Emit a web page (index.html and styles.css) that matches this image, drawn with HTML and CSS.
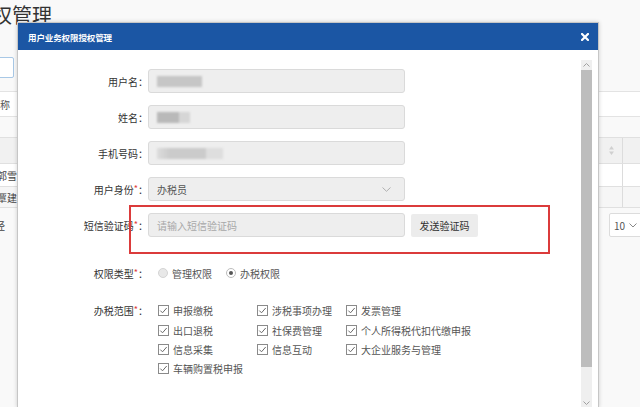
FILE: index.html
```html
<!DOCTYPE html>
<html lang="zh-CN">
<head>
<meta charset="utf-8">
<title>授权管理</title>
<link rel="stylesheet" href="styles.css">
</head>
<body>
<div class="page">
  <div class="page-title">授权管理</div>
  <div class="search-row"><div class="search-input"></div></div>
  <div class="filter-row"><span class="filter-text">名称</span></div>
  <div class="table">
    <div class="trow thead">
      <span class="cell-left"></span>
      <div class="cell-right">
        <span class="cell-a"><svg class="sort" width="5" height="9" viewBox="0 0 5 9"><path d="M2.5 0 L5 3.5 H0 Z M2.5 9 L5 5.5 H0 Z" fill="#d0d0d0"/></svg></span>
        <span class="cell-b"></span>
      </div>
    </div>
    <div class="trow row1">
      <span class="cell-left name1">郭雪</span>
      <div class="cell-right"><span class="cell-a"></span><span class="cell-b"></span></div>
    </div>
    <div class="trow row2 stripe">
      <span class="cell-left name1">覃建</span>
      <div class="cell-right"><span class="cell-a"></span><span class="cell-b"></span></div>
    </div>
  </div>
  <div class="pager">
    <span class="cell-left name2">经</span>
    <div class="page-size">10 <svg width="8" height="5" viewBox="0 0 8 5"><path d="M0.5 0.5 L4 4 L7.5 0.5" fill="none" stroke="#888" stroke-width="1"/></svg></div>
  </div>
</div>

<div class="modal">
  <div class="modal-header">
    <span class="modal-title">用户业务权限授权管理</span>
    <span class="modal-close"><svg width="8" height="8" viewBox="0 0 8 8"><path d="M1 1 L7 7 M7 1 L1 7" stroke="#fff" stroke-width="2.2" stroke-linecap="square"/></svg></span>
  </div>
  <div class="modal-body">
    <div class="form">
      <div class="row">
        <span class="label">用户名：</span>
        <div class="input"><span class="blur blur-user"></span></div>
      </div>
      <div class="row">
        <span class="label">姓名：</span>
        <div class="input"><span class="blur blur-name"></span></div>
      </div>
      <div class="row">
        <span class="label">手机号码：</span>
        <div class="input"><span class="blur blur-phone"></span></div>
      </div>
      <div class="row">
        <span class="label">用户身份<span class="req">*</span>：</span>
        <div class="input select">
          <span>办税员</span>
          <svg class="chev" width="9" height="5" viewBox="0 0 9 5"><path d="M0.5 0.5 L4.5 4.3 L8.5 0.5" fill="none" stroke="#b0b0b0" stroke-width="1"/></svg>
        </div>
      </div>
      <div class="row">
        <span class="label">短信验证码<span class="req">*</span>：</span>
        <div class="input placeholder">请输入短信验证码</div>
        <span class="btn">发送验证码</span>
      </div>
      <div class="row row-radio">
        <span class="label">权限类型<span class="req">*</span>：</span>
        <div class="radios">
          <span class="radio"><span class="radio-dot off"></span>管理权限</span>
          <span class="radio"><span class="radio-dot on"></span>办税权限</span>
        </div>
      </div>
      <div class="row row-check">
        <span class="label label-check">办税范围<span class="req">*</span>：</span>
        <div class="checks">
          <span class="check"><svg class="cb" width="11" height="11" viewBox="0 0 11 11"><rect x="0.5" y="0.5" width="10" height="10" fill="#fff" stroke="#8a8a8a"/><path d="M2.3 5.6 L4.5 7.8 L8.7 3" fill="none" stroke="#6a6a6a" stroke-width="1"/></svg>申报缴税</span>
          <span class="check"><svg class="cb" width="11" height="11" viewBox="0 0 11 11"><rect x="0.5" y="0.5" width="10" height="10" fill="#fff" stroke="#8a8a8a"/><path d="M2.3 5.6 L4.5 7.8 L8.7 3" fill="none" stroke="#6a6a6a" stroke-width="1"/></svg>涉税事项办理</span>
          <span class="check"><svg class="cb" width="11" height="11" viewBox="0 0 11 11"><rect x="0.5" y="0.5" width="10" height="10" fill="#fff" stroke="#8a8a8a"/><path d="M2.3 5.6 L4.5 7.8 L8.7 3" fill="none" stroke="#6a6a6a" stroke-width="1"/></svg>发票管理</span>
          <span class="check"><svg class="cb" width="11" height="11" viewBox="0 0 11 11"><rect x="0.5" y="0.5" width="10" height="10" fill="#fff" stroke="#8a8a8a"/><path d="M2.3 5.6 L4.5 7.8 L8.7 3" fill="none" stroke="#6a6a6a" stroke-width="1"/></svg>出口退税</span>
          <span class="check"><svg class="cb" width="11" height="11" viewBox="0 0 11 11"><rect x="0.5" y="0.5" width="10" height="10" fill="#fff" stroke="#8a8a8a"/><path d="M2.3 5.6 L4.5 7.8 L8.7 3" fill="none" stroke="#6a6a6a" stroke-width="1"/></svg>社保费管理</span>
          <span class="check"><svg class="cb" width="11" height="11" viewBox="0 0 11 11"><rect x="0.5" y="0.5" width="10" height="10" fill="#fff" stroke="#8a8a8a"/><path d="M2.3 5.6 L4.5 7.8 L8.7 3" fill="none" stroke="#6a6a6a" stroke-width="1"/></svg>个人所得税代扣代缴申报</span>
          <span class="check"><svg class="cb" width="11" height="11" viewBox="0 0 11 11"><rect x="0.5" y="0.5" width="10" height="10" fill="#fff" stroke="#8a8a8a"/><path d="M2.3 5.6 L4.5 7.8 L8.7 3" fill="none" stroke="#6a6a6a" stroke-width="1"/></svg>信息采集</span>
          <span class="check"><svg class="cb" width="11" height="11" viewBox="0 0 11 11"><rect x="0.5" y="0.5" width="10" height="10" fill="#fff" stroke="#8a8a8a"/><path d="M2.3 5.6 L4.5 7.8 L8.7 3" fill="none" stroke="#6a6a6a" stroke-width="1"/></svg>信息互动</span>
          <span class="check"><svg class="cb" width="11" height="11" viewBox="0 0 11 11"><rect x="0.5" y="0.5" width="10" height="10" fill="#fff" stroke="#8a8a8a"/><path d="M2.3 5.6 L4.5 7.8 L8.7 3" fill="none" stroke="#6a6a6a" stroke-width="1"/></svg>大企业服务与管理</span>
          <span class="check"><svg class="cb" width="11" height="11" viewBox="0 0 11 11"><rect x="0.5" y="0.5" width="10" height="10" fill="#fff" stroke="#8a8a8a"/><path d="M2.3 5.6 L4.5 7.8 L8.7 3" fill="none" stroke="#6a6a6a" stroke-width="1"/></svg>车辆购置税申报</span>
        </div>
      </div>
    </div>
    <div class="scrollbar">
      <div class="sb-arrow"><svg width="7" height="4" viewBox="0 0 7 4"><path d="M0.5 3.5 L3.5 0.5 L6.5 3.5" fill="none" stroke="#a0a0a0" stroke-width="1"/></svg></div>
      <div class="sb-thumb"></div>
      <div class="sb-track"></div>
      <div class="sb-arrow"><svg width="7" height="4" viewBox="0 0 7 4"><path d="M0.5 0.5 L3.5 3.5 L6.5 0.5" fill="none" stroke="#a0a0a0" stroke-width="1"/></svg></div>
    </div>
  </div>
  <div class="highlight"></div>
</div>
</body>
</html>
```

FILE: styles.css
```css
html, body {
  margin: 0;
  padding: 0;
}
body {
  width: 640px;
  height: 407px;
  overflow: hidden;
  position: relative;
  background: #f9f9f9;
  font-family: "Noto Sans CJK SC", "Noto Sans", sans-serif;
  color: #333;
}

/* background page */
.page {
  width: 640px;
  height: 407px;
  overflow: hidden;
  display: flex;
  flex-direction: column;
}
.page-title {
  height: 30px;
  line-height: 30px;
  font-size: 20px;
  margin-left: -28px;
  color: #333;
  white-space: nowrap;
}
.search-row {
  margin-top: 27px;
  height: 21px;
}
.search-input {
  width: 60px;
  height: 21px;
  box-sizing: border-box;
  margin-left: -46px;
  background: #fff;
  border: 1px solid #a8c8e6;
  border-radius: 2px;
}
.filter-row {
  margin-top: 13px;
  height: 26px;
  box-sizing: border-box;
  border-top: 1px solid #e3e3e3;
  border-bottom: 1px solid #e3e3e3;
  background: #fff;
  display: flex;
  align-items: center;
  font-size: 10px;
  color: #555;
}
.filter-text {
  margin-left: -10px;
}
.table {
  margin-top: 20px;
  display: flex;
  flex-direction: column;
  background: #fff;
}
.trow {
  display: flex;
  align-items: stretch;
  box-sizing: border-box;
  border-bottom: 1px solid #e0e0e0;
  font-size: 10px;
  color: #444;
}
.thead {
  height: 27px;
  background: #f1f1f1;
  border-top: 1px solid #e0e0e0;
}
.row1 { height: 23px; }
.row2 { height: 21px; }
.stripe { background: #f6f6f6; }
.cell-left {
  flex: 1;
  display: flex;
  align-items: center;
  white-space: nowrap;
}
.name1 { margin-left: -3px; }
.name2 { margin-left: -5px; }
.cell-right {
  width: 42px;
  display: flex;
}
.cell-a {
  width: 25px;
  border-right: 1px solid #dcdcdc;
  display: flex;
  align-items: center;
  justify-content: flex-end;
  padding-right: 8px;
  box-sizing: border-box;
}
.cell-b { flex: 1; }
.pager {
  margin-top: 5px;
  height: 24px;
  display: flex;
  align-items: center;
  font-size: 10px;
  color: #444;
}
.page-size {
  width: 40px;
  height: 24px;
  box-sizing: border-box;
  margin-right: -9px;
  border: 1px solid #dcdcdc;
  background: #fff;
  border-radius: 2px;
  display: flex;
  align-items: center;
  gap: 4px;
  padding-left: 4px;
  font-size: 10px;
  color: #555;
}

/* modal */
.modal {
  position: absolute;
  left: 17px;
  top: 22px;
  width: 582px;
  height: 386px;
  box-sizing: border-box;
  border: 1px solid #c6c6c6;
  border-bottom: none;
  background: #fff;
  box-shadow: 0 0 4px rgba(0, 0, 0, 0.18);
  display: flex;
  flex-direction: column;
}
.modal-header {
  height: 27px;
  flex-shrink: 0;
  background: #1b56a4;
  display: flex;
  align-items: center;
  justify-content: space-between;
  padding: 0 9px 0 10px;
}
.modal-title {
  color: #fff;
  font-size: 8.5px;
  font-weight: bold;
  letter-spacing: -0.1px;
}
.modal-close {
  display: flex;
  margin-top: 1px;
}
.modal-body {
  flex: 1;
  display: flex;
  overflow: hidden;
}
.form {
  flex: 1;
  padding: 19px 0 0 30px;
  display: flex;
  flex-direction: column;
}
.row {
  display: flex;
  align-items: center;
  height: 24px;
}
.row + .row {
  margin-top: 12px;
}
.label {
  width: 100px;
  flex-shrink: 0;
  text-align: right;
  font-size: 10px;
  color: #333;
  white-space: nowrap;
}
.req {
  color: #e03a3a;
  font-size: 9px;
  position: relative;
  top: -2px;
}
.input {
  width: 257px;
  height: 24px;
  box-sizing: border-box;
  background: #eeeeee;
  border: 1px solid #dadada;
  border-radius: 3px;
  display: flex;
  align-items: center;
  padding: 0 8px;
  font-size: 10px;
  color: #555;
}
.select {
  justify-content: space-between;
  padding-right: 13px;
}
.placeholder {
  color: #a8a8a8;
}
.btn {
  margin-left: 6px;
  width: 67px;
  height: 23px;
  background: #ececec;
  border-radius: 2px;
  display: flex;
  align-items: center;
  justify-content: center;
  font-size: 10px;
  color: #333;
}
.blur {
  display: inline-block;
  height: 11px;
  filter: blur(1px);
}
.blur-user {
  width: 45px;
  background: #c6c6c6;
}
.blur-name {
  width: 33px;
  background: linear-gradient(to right, #b9b9b9 0, #b9b9b9 66%, #d6d6d6 66%, #d6d6d6 100%);
}
.blur-phone {
  width: 66px;
  background: linear-gradient(to right, #dcdcdc 0, #cbcbcb 20%, #cbcbcb 75%, #dedede 75%, #dedede 100%);
}

.row-radio {
  height: 20px;
}
.row + .row-radio {
  margin-top: 26px;
}
.radios {
  display: flex;
  align-items: center;
  padding-left: 10px;
  gap: 14px;
}
.radio {
  display: flex;
  align-items: center;
  gap: 4px;
  font-size: 10px;
  color: #555;
}
.radio-dot {
  width: 10px;
  height: 10px;
  box-sizing: border-box;
  border-radius: 50%;
  border: 1px solid #d4d4d4;
  display: flex;
  align-items: center;
  justify-content: center;
}
.radio-dot.off {
  background: #e8e8e8;
}
.radio-dot.on {
  background: #fff;
  border-color: #bcbcbc;
}
.radio-dot.on::after {
  content: "";
  width: 4px;
  height: 4px;
  border-radius: 50%;
  background: #555;
}
.row-check {
  height: auto;
  align-items: flex-start;
}
.row-radio + .row-check {
  margin-top: 18px;
}
.label-check {
  line-height: 19.4px;
}
.checks {
  display: grid;
  grid-template-columns: repeat(3, auto);
  justify-content: start;
  column-gap: 14px;
  padding-left: 10px;
}
.check {
  display: flex;
  align-items: center;
  gap: 4px;
  height: 19.4px;
  font-size: 10px;
  color: #555;
  white-space: nowrap;
}
.cb {
  flex-shrink: 0;
}

/* fake scrollbar */
.scrollbar {
  width: 11px;
  margin: 10px 6px 0 0;
  display: flex;
  flex-direction: column;
  background: #efefef;
}
.sb-arrow {
  height: 10px;
  display: flex;
  align-items: center;
  justify-content: center;
}
.sb-thumb {
  height: 297px;
  background: #bdbdbd;
}
.sb-track {
  flex: 1;
}

/* red annotation box */
.highlight {
  position: absolute;
  left: 111px;
  top: 182px;
  width: 421px;
  height: 49px;
  box-sizing: border-box;
  border-width: 2px;
  border-style: solid;
  border-color: #db3b3b;
}
```
